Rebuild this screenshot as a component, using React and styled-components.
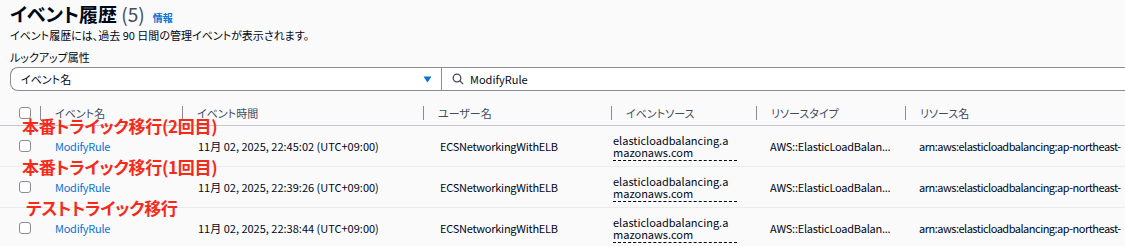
import React from 'react'
import styled, { createGlobalStyle } from 'styled-components'

const GlobalStyle = createGlobalStyle`
  html, body {
    margin: 0;
    padding: 0;
    background: #fafafa;
    overflow: hidden;
  }
  body {
    font-family: "Noto Sans CJK JP", "Noto Sans", sans-serif;
    color: #000716;
    font-feature-settings: "palt";
  }
`;

const events = [
  { note: '本番トライック移行(2回目)', noteLeft: 22, time: '11月 02, 2025, 22:45:02 (UTC+09:00)' },
  { note: '本番トライック移行(1回目)', noteLeft: 22, time: '11月 02, 2025, 22:39:26 (UTC+09:00)' },
  { note: 'テストトライック移行', noteLeft: 26, time: '11月 02, 2025, 22:38:44 (UTC+09:00)' },
]

const columns = '40px 142px 241px 188px 145px 149px 240px'

function App() {
  return (
    <Page>
      <GlobalStyle />
      <TitleRow>
        <h1>イベント履歴 <span>(5)</span></h1>
        <InfoLink>情報</InfoLink>
      </TitleRow>
      <Description>イベント履歴には、過去 90 日間の管理イベントが表示されます。</Description>
      <Label>ルックアップ属性</Label>
      <Filter>
        <Select>
          <span>イベント名</span>
          <svg width="9" height="7" viewBox="0 0 9 7"><path d="M0.5 0.5h8L4.5 6.5z" fill="#0972d3" /></svg>
        </Select>
        <Search>
          <svg width="12" height="12" viewBox="0 0 12 12" fill="none" stroke="#414d5c" strokeWidth="1.3">
            <circle cx="5" cy="5" r="3.8" />
            <path d="M7.8 7.8l3.3 3.3" />
          </svg>
          <span>ModifyRule</span>
        </Search>
      </Filter>
      <Table>
        <HeaderRow>
          <Cell><Checkbox /></Cell>
          <HeadCell>イベント名</HeadCell>
          <HeadCell>イベント時間</HeadCell>
          <HeadCell>ユーザー名</HeadCell>
          <HeadCell>イベントソース</HeadCell>
          <HeadCell>リソースタイプ</HeadCell>
          <HeadCell>リソース名</HeadCell>
        </HeaderRow>
        {events.map((ev) => (
          <Row key={ev.time}>
            <Note style={{ left: ev.noteLeft }}>{ev.note}</Note>
            <Cell><Checkbox /></Cell>
            <Cell $pad={15} $spacing={-0.25}><EventLink>ModifyRule</EventLink></Cell>
            <Cell $pad={16}>{ev.time}</Cell>
            <Cell $pad={17} $spacing={-0.25}>ECSNetworkingWithELB</Cell>
            <Cell $pad={2}><Source>elasticloadbalancing.amazonaws.com</Source></Cell>
            <Cell $pad={14} $spacing={-0.25}>AWS::ElasticLoadBalan...</Cell>
            <Cell $pad={14} $spacing={-0.5}>arn:aws:elasticloadbalancing:ap-northeast-</Cell>
          </Row>
        ))}
      </Table>
    </Page>
  )
}

const Page = styled.div`
  width: 1125px;
  height: 246px;
  overflow: hidden;
  padding: 2px 0 0 10px;
  box-sizing: border-box;
`;

const TitleRow = styled.div`
  display: flex;
  align-items: baseline;
  gap: 8px;
  h1 {
    margin: 0;
    font-size: 19px;
    line-height: 24px;
    font-weight: 700;
    span {
      font-weight: 400;
      color: #414d5c;
    }
  }
`;

const InfoLink = styled.a`
  font-size: 10px;
  font-weight: 700;
  color: #0972d3;
`;

const Description = styled.div`
  font-size: 11px;
  line-height: 16px;
  margin-top: 1px;
`;

const Label = styled.div`
  font-size: 11px;
  line-height: 16px;
  margin-top: 6px;
`;

const Filter = styled.div`
  display: flex;
  margin-top: 2px;
  height: 24px;
  box-sizing: border-box;
  border: 1px solid #8c8c94;
  border-right: none;
  border-radius: 8px 0 0 8px;
  background: #fff;
  width: 1130px;
  font-size: 11px;
`;

const Select = styled.div`
  width: 431px;
  display: flex;
  align-items: center;
  justify-content: space-between;
  padding: 0 9px 0 10px;
  box-sizing: border-box;
  border-right: 1px solid #8c8c94;
`;

const Search = styled.div`
  flex: 1;
  display: flex;
  align-items: center;
  gap: 6px;
  padding-left: 10px;
`;

const Table = styled.div`
  margin: 10px 0 0 -10px;
  font-size: 11px;
`;

const HeaderRow = styled.div`
  display: grid;
  grid-template-columns: ${columns};
  height: 24px;
  border-bottom: 1px solid #c6c6cd;
  align-items: center;
  color: #414d5c;
`;

const Row = styled.div`
  position: relative;
  display: grid;
  grid-template-columns: ${columns};
  height: 40px;
  border-bottom: 1px solid #e9ebed;
  align-items: center;
`;

const Cell = styled.div`
  padding-left: ${(p) => p.$pad || 19}px;
  letter-spacing: ${(p) => (p.$spacing ? `${p.$spacing}px` : 'normal')};
  white-space: nowrap;
  overflow: hidden;
`;

const HeadCell = styled.div`
  position: relative;
  padding-left: 15px;
  white-space: nowrap;
  &::before {
    content: '';
    position: absolute;
    left: 0;
    top: 50%;
    transform: translateY(-50%);
    height: 14px;
    border-left: 1px solid #8c8c94;
  }
`;

const Checkbox = styled.span`
  display: block;
  width: 12px;
  height: 12px;
  box-sizing: border-box;
  border: 1px solid #8c8c94;
  border-radius: 3px;
  background: #fff;
`;

const EventLink = styled.a`
  color: #0972d3;
  text-decoration: underline;
  text-underline-offset: 3px;
`;

const Source = styled.span`
  display: block;
  width: 124px;
  white-space: normal;
  word-break: break-all;
  line-height: 12px;
  padding-bottom: 2px;
  border-bottom: 1px dashed #000716;
  margin-top: 3px;
`;

const Note = styled.div`
  position: absolute;
  top: -10px;
  font-size: 17px;
  line-height: 20px;
  font-weight: 700;
  letter-spacing: -0.3px;
  color: #f52a1a;
  white-space: nowrap;
`;

export default App
